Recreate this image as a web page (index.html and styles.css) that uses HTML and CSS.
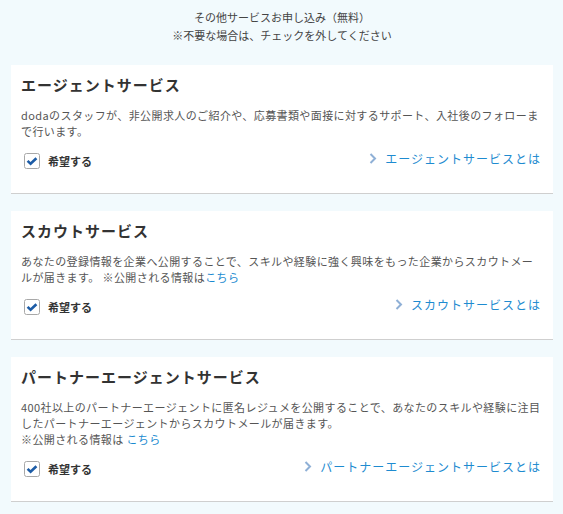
FILE: index.html
```html
<!DOCTYPE html>
<html lang="ja">
<head>
<meta charset="utf-8">
<link rel="stylesheet" href="styles.css">
</head>
<body>
<div class="page">
  <div class="intro">
    <p>その他サービスお申し込み（無料）</p>
    <p>※不要な場合は、チェックを外してください</p>
  </div>

  <section class="card">
    <h2 class="title">エージェントサービス</h2>
    <p class="desc">dodaのスタッフが、非公開求人のご紹介や、応募書類や面接に対するサポート、入社後のフォローまで行います。</p>
    <div class="row">
      <label class="check">
        <svg class="box" width="16" height="16" viewBox="0 0 16 16"><rect x="0.5" y="0.5" width="15" height="15" rx="2" fill="#fff" stroke="#a8a8a8"/><polyline points="3.6,7.8 6.6,10.8 12.4,5.2" fill="none" stroke="#1d5ca6" stroke-width="2.6"/></svg>
        <span>希望する</span>
      </label>
      <a class="more" href="#"><svg class="chev" width="8" height="11" viewBox="0 0 8 11"><polyline points="1.5,1 6,5.5 1.5,10" fill="none" stroke="#8fb0d6" stroke-width="2"/></svg>エージェントサービスとは</a>
    </div>
  </section>

  <section class="card">
    <h2 class="title">スカウトサービス</h2>
    <p class="desc">あなたの登録情報を企業へ公開することで、スキルや経験に強く興味をもった企業からスカウトメールが届きます。 ※公開される情報は<a class="lnk" href="#">こちら</a></p>
    <div class="row">
      <label class="check">
        <svg class="box" width="16" height="16" viewBox="0 0 16 16"><rect x="0.5" y="0.5" width="15" height="15" rx="2" fill="#fff" stroke="#a8a8a8"/><polyline points="3.6,7.8 6.6,10.8 12.4,5.2" fill="none" stroke="#1d5ca6" stroke-width="2.6"/></svg>
        <span>希望する</span>
      </label>
      <a class="more" href="#"><svg class="chev" width="8" height="11" viewBox="0 0 8 11"><polyline points="1.5,1 6,5.5 1.5,10" fill="none" stroke="#8fb0d6" stroke-width="2"/></svg>スカウトサービスとは</a>
    </div>
  </section>

  <section class="card">
    <h2 class="title">パートナーエージェントサービス</h2>
    <p class="desc">400社以上のパートナーエージェントに匿名レジュメを公開することで、あなたのスキルや経験に注目したパートナーエージェントからスカウトメールが届きます。<br>※公開される情報は <a class="lnk" href="#">こちら</a></p>
    <div class="row">
      <label class="check">
        <svg class="box" width="16" height="16" viewBox="0 0 16 16"><rect x="0.5" y="0.5" width="15" height="15" rx="2" fill="#fff" stroke="#a8a8a8"/><polyline points="3.6,7.8 6.6,10.8 12.4,5.2" fill="none" stroke="#1d5ca6" stroke-width="2.6"/></svg>
        <span>希望する</span>
      </label>
      <a class="more" href="#"><svg class="chev" width="8" height="11" viewBox="0 0 8 11"><polyline points="1.5,1 6,5.5 1.5,10" fill="none" stroke="#8fb0d6" stroke-width="2"/></svg>パートナーエージェントサービスとは</a>
    </div>
  </section>
</div>
</body>
</html>
```

FILE: styles.css
```css
html, body {
  margin: 0;
  padding: 0;
  background: #f2fafd;
}
body {
  font-family: "Noto Sans CJK JP", "Noto Sans", sans-serif;
  color: #333;
}
.page {
  padding: 8px 10px 0 11px;
  display: flex;
  flex-direction: column;
  gap: 17px;
}
.intro {
  text-align: center;
  font-size: 11px;
  line-height: 18px;
  color: #444;
  margin-bottom: 4px;
}
.intro p {
  margin: 0;
}
.card {
  background: #fff;
  border-bottom: 1px solid #cfcfcf;
  padding: 10px 10px 24px 10px;
  width: 522px;
}
.title {
  margin: 0;
  font-size: 15px;
  line-height: 20px;
  font-weight: bold;
  letter-spacing: 1px;
  color: #333;
}
.desc {
  margin: 12px 0 0;
  font-size: 11px;
  line-height: 16px;
  letter-spacing: 0.4px;
  color: #555;
}
.lnk {
  color: #1a8ad0;
  text-decoration: none;
}
.row {
  margin-top: 14px;
  display: flex;
  justify-content: space-between;
  align-items: center;
  height: 16px;
}
.check {
  display: flex;
  align-items: center;
  gap: 8px;
  margin-left: 3px;
  font-size: 11px;
  font-weight: bold;
  color: #333;
}
.box {
  display: block;
}
.more {
  display: flex;
  align-items: center;
  gap: 8px;
  margin-right: 2px;
  font-size: 12px;
  letter-spacing: 1px;
  color: #1e8bd0;
  text-decoration: none;
  margin-bottom: 6px;
}
.chev {
  display: block;
}
```
